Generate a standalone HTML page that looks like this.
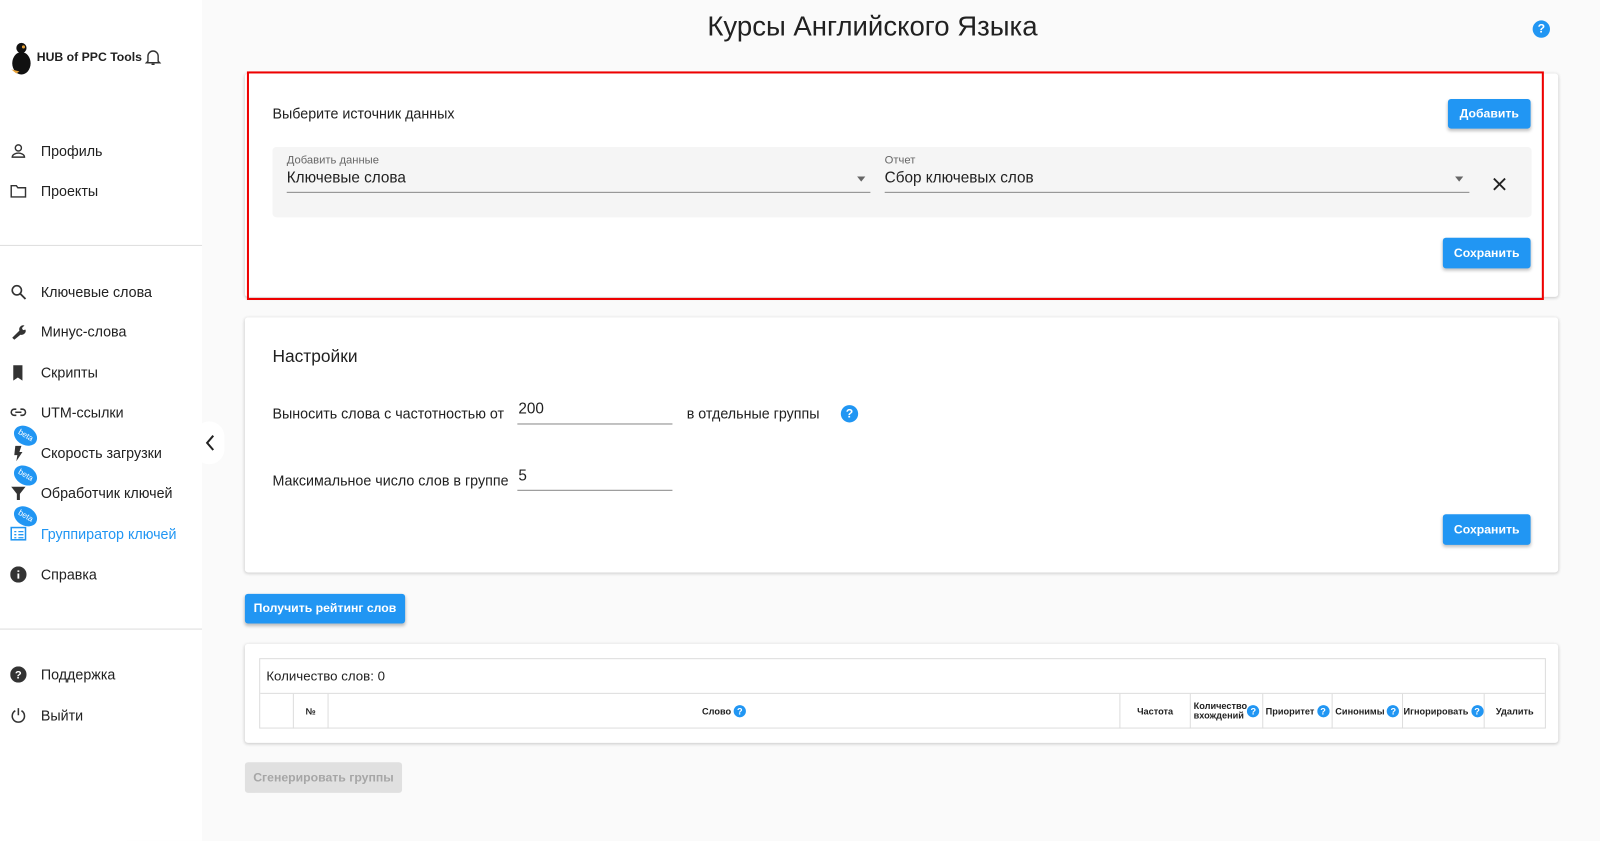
<!DOCTYPE html>
<html><head><meta charset="utf-8"><style>
*{box-sizing:border-box;margin:0;padding:0}
body{width:1600px;height:824px;background:#fafafa;font-family:"Liberation Sans",sans-serif;color:#212121;position:relative;overflow:hidden}
#w{position:absolute;left:0;top:0;width:1568px;height:808px;transform:scale(1.0204);transform-origin:0 0}
.abs{position:absolute}
.side{left:0;top:0;width:198px;height:824px;background:#fff}
.nav{position:absolute;left:0;width:198px;height:36px;font-size:14px;display:flex;align-items:center}
.nav .ic{position:absolute;left:10px;top:10px;width:16px;height:16px}
.nav span{position:absolute;left:40px}
.hr{position:absolute;left:0;width:198px;height:1px;background:#ddd}
.beta{position:absolute;left:13px;top:-8px;width:24px;height:18px;border-radius:50%;background:#2196f3;color:#fff;font-size:8px;line-height:18px;text-align:center;transform:rotate(30deg)}
.card{position:absolute;background:#fff;box-shadow:0 1px 3px rgba(0,0,0,.2);border-radius:3px}
.btn{position:absolute;background:#2196f3;color:#fff;font-size:12px;font-weight:bold;border-radius:3px;text-align:center;box-shadow:0 2px 3px rgba(0,0,0,.25)}
.q{display:inline-block;width:12px;height:12px;border-radius:50%;background:#2196f3;color:#fff;font-size:9px;font-weight:bold;line-height:12px;text-align:center;vertical-align:middle}
.inp{position:absolute;border-bottom:1px solid #888;font-size:15px}
.th{position:absolute;top:0;height:34px;border-right:1px solid #ddd;font-size:9px;font-weight:bold;display:flex;align-items:center;justify-content:center}
</style></head><body><div id="w">
<div class="abs side">
 <svg class="abs" style="left:8px;top:40px" width="24" height="34" viewBox="0 0 24 34"><ellipse cx="13" cy="22" rx="9" ry="11" fill="#111"/><circle cx="13" cy="7" r="5" fill="#111"/><circle cx="15" cy="6" r="1.5" fill="#e8a33a"/><path d="M3 28l5 4 3-2z" fill="#e8a33a"/></svg>
 <div class="abs" style="left:36px;top:49px;font-size:12px;font-weight:bold">HUB of PPC Tools</div>
 <svg class="abs" style="left:142px;top:47px" width="16" height="18" viewBox="0 0 16 18"><path d="M3 13V8a5 5 0 0 1 10 0v5l1.5 1.5h-13z M6.5 16h3" fill="none" stroke="#333" stroke-width="1.4"/></svg>
 <div class="nav" style="top:130px"><svg class="ic" viewBox="0 0 16 16"><circle cx="8" cy="5" r="3" fill="none" stroke="#333" stroke-width="1.4"/><path d="M2 14c0-3 4-4 6-4s6 1 6 4z" fill="none" stroke="#333" stroke-width="1.4"/></svg><span>Профиль</span></div>
 <div class="nav" style="top:169px"><svg class="ic" viewBox="0 0 16 16"><path d="M1 3h5l1.5 2H15v9H1z" fill="none" stroke="#333" stroke-width="1.4"/></svg><span>Проекты</span></div>
 <div class="hr" style="top:240px"></div>
 <div class="nav" style="top:268px"><svg class="ic" viewBox="0 0 16 16"><circle cx="6.5" cy="6.5" r="4.5" fill="none" stroke="#333" stroke-width="1.6"/><path d="M10 10l5 5" stroke="#333" stroke-width="1.8"/></svg><span>Ключевые слова</span></div>
 <div class="nav" style="top:307px"><svg class="ic" viewBox="0 0 16 16"><path d="M2 14l7-7a4 4 0 0 1 5-5l-2.5 2.5 1 2L15 6a4 4 0 0 1-5 5l-6 5z" fill="#333"/></svg><span>Минус-слова</span></div>
 <div class="nav" style="top:347px"><svg class="ic" viewBox="0 0 16 16"><path d="M3 1h9v15l-4.5-3L3 16z" fill="#333"/></svg><span>Скрипты</span></div>
 <div class="nav" style="top:386px"><svg class="ic" viewBox="0 0 16 16"><path d="M6 5H4a3 3 0 0 0 0 6h2M10 5h2a3 3 0 0 1 0 6h-2M5 8h6" fill="none" stroke="#333" stroke-width="1.5"/></svg><span>UTM-ссылки</span></div>
 <div class="nav" style="top:426px"><svg class="ic" viewBox="0 0 16 16"><path d="M5 1h6L9 7h3l-6 9 1-6H4z" fill="#333"/></svg><div class="beta">beta</div><span>Скорость загрузки</span></div>
 <div class="nav" style="top:465px"><svg class="ic" viewBox="0 0 16 16"><path d="M1 2h14L9.5 9v6h-3V9z" fill="#333"/></svg><div class="beta">beta</div><span>Обработчик ключей</span></div>
 <div class="nav" style="top:505px;color:#2196f3"><svg class="ic" viewBox="0 0 16 16"><rect x="1" y="2" width="14" height="12" fill="none" stroke="#2196f3" stroke-width="1.5"/><path d="M4 6h2M8 6h5M4 9h2M8 9h5M4 12h2M8 12h5" stroke="#2196f3" stroke-width="1.3"/></svg><div class="beta">beta</div><span>Группиратор ключей</span></div>
 <div class="nav" style="top:545px"><svg class="ic" viewBox="0 0 16 16"><circle cx="8" cy="8" r="8" fill="#333"/><path d="M8 7v5M8 4v1.5" stroke="#fff" stroke-width="1.8"/></svg><span>Справка</span></div>
 <div class="hr" style="top:616px"></div>
 <div class="nav" style="top:643px"><svg class="ic" viewBox="0 0 16 16"><circle cx="8" cy="8" r="8" fill="#333"/><text x="8" y="12" font-size="11" font-weight="bold" fill="#fff" text-anchor="middle" font-family="Liberation Sans">?</text></svg><span>Поддержка</span></div>
 <div class="nav" style="top:683px"><svg class="ic" viewBox="0 0 16 16"><path d="M5 3.5a6 6 0 1 0 6 0M8 1v7" fill="none" stroke="#333" stroke-width="1.5"/></svg><span>Выйти</span></div>
</div>
<div class="abs" style="left:190px;top:413px;width:30px;height:42px;border-radius:21px;background:#fff"></div>
<svg class="abs" style="left:199px;top:425px" width="14" height="18" viewBox="0 0 14 18"><path d="M10 2L4 9l6 7" fill="none" stroke="#222" stroke-width="2"/></svg>
<div class="abs" style="left:0;width:1710px;top:11px;text-align:center;font-size:27px">Курсы Английского Языка</div>
<div class="abs" style="left:1502px;top:20px"><span class="q" style="width:17px;height:17px;line-height:17px;font-size:12px">?</span></div>

<div class="card" style="left:240px;top:72px;width:1287px;height:219px"></div>
<div class="abs" style="left:242px;top:70px;width:1271px;height:224px;border:2px solid #e00"></div>
<div class="abs" style="left:267px;top:103px;font-size:14px">Выберите источник данных</div>
<div class="btn" style="left:1419px;top:97px;width:81px;height:29px;line-height:29px">Добавить</div>
<div class="abs" style="left:267px;top:144px;width:1234px;height:69px;background:#f5f5f5;border-radius:4px"></div>
<div class="abs" style="left:281px;top:151px;font-size:11px;color:#666">Добавить данные</div>
<div class="inp" style="left:281px;top:166px;width:572px;height:23px">Ключевые слова</div>
<div class="abs" style="left:840px;top:173px;border:4px solid transparent;border-top:5px solid #666"></div>
<div class="abs" style="left:867px;top:151px;font-size:11px;color:#666">Отчет</div>
<div class="inp" style="left:867px;top:166px;width:573px;height:23px">Сбор ключевых слов</div>
<div class="abs" style="left:1426px;top:173px;border:4px solid transparent;border-top:5px solid #666"></div>
<svg class="abs" style="left:1463px;top:174px" width="13" height="13"><path d="M1 1l11 11M12 1L1 12" stroke="#222" stroke-width="1.8"/></svg>
<div class="btn" style="left:1414px;top:233px;width:86px;height:30px;line-height:30px">Сохранить</div>

<div class="card" style="left:240px;top:311px;width:1287px;height:250px"></div>
<div class="abs" style="left:267px;top:340px;font-size:17px">Настройки</div>
<div class="abs" style="left:267px;top:397px;font-size:14px">Выносить слова с частотностью от</div>
<div class="inp" style="left:507px;top:392px;width:152px;height:24px;padding-left:1px">200</div>
<div class="abs" style="left:673px;top:397px;font-size:14px">в отдельные группы</div>
<div class="abs" style="left:824px;top:397px"><span class="q" style="width:17px;height:17px;line-height:17px;font-size:12px">?</span></div>
<div class="abs" style="left:267px;top:463px;font-size:14px">Максимальное число слов в группе</div>
<div class="inp" style="left:507px;top:458px;width:152px;height:23px;padding-left:1px">5</div>
<div class="btn" style="left:1414px;top:504px;width:86px;height:30px;line-height:30px">Сохранить</div>

<div class="btn" style="left:240px;top:582px;width:157px;height:29px;line-height:29px">Получить рейтинг слов</div>

<div class="card" style="left:240px;top:631px;width:1287px;height:97px"></div>
<div class="abs" style="left:254px;top:645px;width:1261px;height:69px;border:1px solid #ddd">
 <div style="position:absolute;left:6px;top:9px;font-size:13px">Количество слов: 0</div>
 <div style="position:absolute;left:0;top:33px;width:1259px;height:34px;border-top:1px solid #ddd">
  <div class="th" style="left:0;width:33px"></div>
  <div class="th" style="left:33px;width:34px">№</div>
  <div class="th" style="left:67px;width:776px">Слово&nbsp;<span class="q">?</span></div>
  <div class="th" style="left:843px;width:69px">Частота</div>
  <div class="th" style="left:912px;width:71px;line-height:9px">Количество<br>вхождений&nbsp;<span class="q">?</span></div>
  <div class="th" style="left:983px;width:68px">Приоритет&nbsp;<span class="q">?</span></div>
  <div class="th" style="left:1051px;width:69px">Синонимы&nbsp;<span class="q">?</span></div>
  <div class="th" style="left:1120px;width:80px">Игнорировать&nbsp;<span class="q">?</span></div>
  <div class="th" style="left:1200px;width:59px;border:none">Удалить</div>
 </div>
</div>
<div class="abs" style="left:240px;top:747px;width:154px;height:30px;line-height:30px;background:#e0e0e0;color:#a6a6a6;font-size:12px;font-weight:bold;text-align:center;border-radius:3px">Сгенерировать группы</div>
</div></body></html>
